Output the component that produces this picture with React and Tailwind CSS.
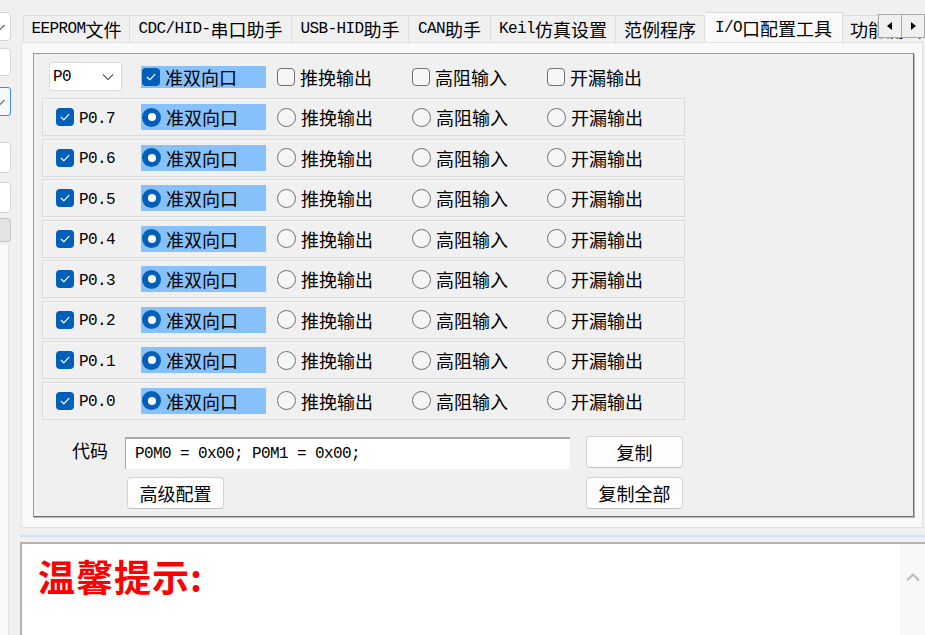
import React from "react";

const CJK = "font-['Noto_Sans_CJK_SC','Noto_Sans',sans-serif]";
const MONO = "font-['Liberation_Mono','Noto_Sans_CJK_SC',monospace]";

function Mix({ t }) {
  const parts = t.split(/([ -~]+)/).filter((p) => p.length > 0);
  return (
    <>
      {parts.map((p, i) =>
        /^[ -~]+$/.test(p) ? (
          <span key={i} className="font-['Liberation_Mono',monospace] text-[16px] tracking-[-0.6px] whitespace-pre">
            {p}
          </span>
        ) : (
          <span key={i}>{p}</span>
        )
      )}
    </>
  );
}

function Check({ on }) {
  return on ? (
    <span className="w-[18px] h-[18px] rounded-[4px] bg-[#005fb8] flex items-center justify-center shrink-0">
      <svg width="12" height="12" viewBox="0 0 12 12">
        <path d="M2.2 6.3 L4.8 8.8 L9.9 3.4" fill="none" stroke="white" strokeWidth="1.2" strokeLinecap="round" strokeLinejoin="round" />
      </svg>
    </span>
  ) : (
    <span className="w-[18px] h-[18px] rounded-[4px] border border-[#6f6f6f] bg-[#f6f6f6] shrink-0" />
  );
}

function Radio({ on }) {
  return on ? (
    <span className="w-[19px] h-[19px] rounded-full bg-[#005fb8] flex items-center justify-center shrink-0">
      <span className="w-[8px] h-[8px] rounded-full bg-white" />
    </span>
  ) : (
    <span className="w-[19px] h-[19px] rounded-full border border-[#6f6f6f] bg-[#f6f6f6] shrink-0" />
  );
}

const OPTS = ["准双向口", "推挽输出", "高阻输入", "开漏输出"];

function Opt({ label, on, radio, tall }) {
  return (
    <div
      className={`w-[125px] flex items-center gap-[5px] pl-[1px] ${tall ? "h-[26px]" : "h-[22px]"} ${
        on ? "bg-[#86c1fc]" : ""
      }`}
    >
      {radio ? <Radio on={on} /> : <Check on={on} />}
      <span className="text-[18px] leading-none text-black">{label}</span>
    </div>
  );
}

const PINS = ["P0.7", "P0.6", "P0.5", "P0.4", "P0.3", "P0.2", "P0.1", "P0.0"];

const TABS = [
  { t: "EEPROM文件", w: "w-[107px]" },
  { t: "CDC/HID-串口助手", w: "w-[162px]" },
  { t: "USB-HID助手", w: "w-[117px]" },
  { t: "CAN助手", w: "w-[82px]" },
  { t: "Keil仿真设置", w: "w-[125px]" },
  { t: "范例程序", w: "w-[89px]" },
];

function SmallChevron() {
  return (
    <svg width="12" height="12" viewBox="0 0 12 12" className="shrink-0">
      <path d="M1.5 4 L6 8.5 L10.5 4" fill="none" stroke="#606060" strokeWidth="1.1" />
    </svg>
  );
}

export default function App() {
  return (
    <div className={`w-[925px] h-[635px] bg-[#f0f0f0] flex overflow-hidden ${CJK} text-black`}>
      {/* left clipped strip */}
      <div className="w-[20px] shrink-0 flex flex-col overflow-hidden">
        <div className="mt-[12px] h-[29px] w-[15px] -ml-[4px] rounded-[4px] bg-white border border-[#d6d6d6] flex items-center">
          <span className="-ml-[3px]">
            <SmallChevron />
          </span>
        </div>
        <div className="mt-[7px] h-[28px] w-[15px] -ml-[4px] rounded-[4px] bg-white border border-[#d6d6d6]" />
        <div className="mt-[11px] h-[29px] w-[15px] -ml-[4px] rounded-[3px] bg-[#f4f9fe] border border-[#3c8fd8] flex items-center">
          <span className="-ml-[3px]">
            <SmallChevron />
          </span>
        </div>
        <div className="mt-[26px] h-[31px] w-[15px] -ml-[4px] rounded-[4px] bg-white border border-[#d6d6d6]" />
        <div className="mt-[9px] h-[31px] w-[15px] -ml-[4px] rounded-[4px] bg-white border border-[#d6d6d6]" />
        <div className="mt-[5px] h-[24px] w-[15px] -ml-[4px] rounded-[3px] bg-[#e3e3e3] border border-[#c4c4c4]" />
        <div className="mt-[3px] flex-1 w-[9px] bg-[#fafafa] border-r border-[#e4e4e4]" />
      </div>

      {/* main area */}
      <div className="flex-1 flex flex-col min-w-0">
        {/* tab bar */}
        <div className="relative h-[42px] shrink-0 flex items-end pl-[3px] overflow-hidden">
          {TABS.map((tab, i) => (
            <div
              key={i}
              className={`${tab.w} h-[27px] shrink-0 border-t border-r border-[#dcdcdc] ${
                i === 0 ? "border-l" : ""
              } flex items-center justify-center text-[18px] leading-none whitespace-nowrap`}
            >
              <Mix t={tab.t} />
            </div>
          ))}
          <div className="w-[138px] h-[31px] shrink-0 bg-[#f9f9f9] border-t border-r border-[#dcdcdc] -mb-[1px] relative z-10 flex items-center justify-center text-[18px] leading-none whitespace-nowrap">
            <Mix t="I/O口配置工具" />
          </div>
          <div className="w-[70px] h-[27px] shrink-0 border-t border-[#dcdcdc] flex items-center pl-[7px] text-[18px] leading-none whitespace-nowrap">
            功能测试
          </div>
          <div className="absolute right-0 top-[14px] flex z-20">
            <div className="w-[24px] h-[24px] bg-[#f0f0f0] border border-[#a8a8a8] flex items-center justify-center">
              <svg width="6" height="8" viewBox="0 0 6 8">
                <path d="M5 0 L5 8 L0 4 Z" fill="#000" />
              </svg>
            </div>
            <div className="w-[23px] h-[24px] bg-[#f0f0f0] border border-l-0 border-[#a8a8a8] flex items-center justify-center">
              <svg width="6" height="8" viewBox="0 0 6 8">
                <path d="M1 0 L1 8 L6 4 Z" fill="#000" />
              </svg>
            </div>
          </div>
        </div>

        {/* tab page */}
        <div className="ml-[1px] w-[902px] h-[486px] shrink-0 bg-[#f9f9f9] border border-[#e2e2e2] pt-[10px] pl-[11px]">
          <div className="w-[881px] h-[464px] bg-[#f0f0f0] border border-t-[#9a9a9a] border-l-[#9a9a9a] border-r-[#6e6e6e] border-b-[#6e6e6e] shadow-[1px_1px_0_#b8b8b8] pl-[8px] pt-[8px]">
            {/* header row */}
            <div className="flex items-center pl-[7px]">
              <div className="w-[73px] h-[29px] bg-white border border-[#d9d9d9] rounded-[3px] flex items-center justify-between pl-[3px] pr-[6px]">
                <span className={`${MONO} text-[16px] tracking-[-0.6px] leading-none`}>P0</span>
                <svg width="14" height="10" viewBox="0 0 14 10">
                  <path d="M2 2.5 L7 7.5 L12 2.5" fill="none" stroke="#555" strokeWidth="1.1" />
                </svg>
              </div>
              <div className="ml-[19px] flex gap-[10px]">
                {OPTS.map((o, i) => (
                  <Opt key={o} label={o} on={i === 0} />
                ))}
              </div>
            </div>

            {/* pin rows */}
            <div className="mt-[7px] flex flex-col gap-[2.5px]">
              {PINS.map((p) => (
                <div
                  key={p}
                  className="w-[643px] h-[38px] border border-[#dadada] shadow-[inset_1px_1px_0_#f7f7f7] flex items-center pl-[13px]"
                >
                  <Check on />
                  <span className={`ml-[5px] mt-[3px] w-[62px] ${MONO} text-[16px] tracking-[-0.6px] leading-none`}>{p}</span>
                  <div className="flex gap-[10px]">
                    {OPTS.map((o, i) => (
                      <Opt key={o} label={o} on={i === 0} radio tall />
                    ))}
                  </div>
                </div>
              ))}
            </div>

            {/* code area */}
            <div className="mt-[15px] grid grid-cols-[53px_461px_97px] gap-y-[8px] pl-[30px] items-center">
              <span className="text-[18px] leading-none -mt-[4px]">代码</span>
              <div className="w-[445px] h-[32px] mt-[2px] bg-white border-t-2 border-l border-[#a8a8a8] flex items-center pl-[9px]">
                <span className={`${MONO} text-[16px] tracking-[-0.6px] leading-none whitespace-pre`}>P0M0 = 0x00; P0M1 = 0x00;</span>
              </div>
              <div className="w-[97px] h-[32px] bg-[#fdfdfd] border border-[#d2d2d2] border-b-[#c2c2c2] rounded-[4px] flex items-center justify-center text-[18px] leading-none">
                复制
              </div>
              <span />
              <div className="ml-[2px] w-[97px] h-[32px] bg-[#fdfdfd] border border-[#d2d2d2] border-b-[#c2c2c2] rounded-[4px] flex items-center justify-center text-[18px] leading-none">
                高级配置
              </div>
              <div className="w-[97px] h-[32px] bg-[#fdfdfd] border border-[#d2d2d2] border-b-[#c2c2c2] rounded-[4px] flex items-center justify-center text-[18px] leading-none">
                复制全部
              </div>
            </div>
          </div>
        </div>

        {/* splitter */}
        <div className="mt-[7px] h-[2px] shrink-0 bg-[#cfe5f7]" />

        {/* bottom text box */}
        <div className="mt-[5px] flex-1 bg-white border-t-2 border-l-2 border-[#b2b2b2] flex min-h-0">
          <div className="flex-1 pl-[16px] pt-[14px]">
            <span className="text-[37px] leading-none font-semibold tracking-[1px] text-[#ff0000]">温馨提示:</span>
          </div>
          <div className="w-[25px] bg-[#f8f8f8] flex justify-center pt-[28px]">
            <svg width="16" height="10" viewBox="0 0 16 10">
              <path d="M2 8.5 L8 2.5 L14 8.5" fill="none" stroke="#bdbdbd" strokeWidth="2.2" />
            </svg>
          </div>
        </div>
      </div>
    </div>
  );
}
